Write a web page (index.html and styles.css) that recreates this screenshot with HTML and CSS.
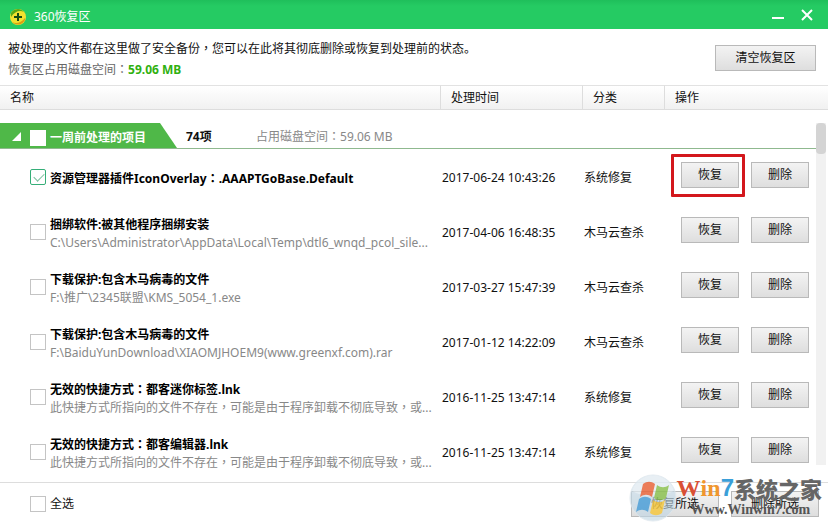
FILE: index.html
```html
<!DOCTYPE html>
<html lang="zh-CN">

<head>
    <meta charset="UTF-8">
    <meta name="viewport" content="width=device-width, initial-scale=1.0">
    <title>360恢复区</title>
    <link rel="stylesheet" href="styles.css">
</head>

<body>
    <header class="title-bar">
        <svg class="logo" viewBox="0 0 18 18" aria-hidden="true">
            <circle cx="9" cy="9" r="8" fill="#f3e12f" />
            <path d="M2 5a8 8 0 0 1 13-1C11 2 6 3 2 9z" fill="#58a818" />
            <path d="M16 12a8 8 0 0 1-13 2c4 2 9 1 13-4z" fill="#dc9d12" />
            <path d="M8 5h2v3h3v2h-3v3H8v-3H5V8h3z" fill="#174d13" />
        </svg>
        <h1>360恢复区</h1>
        <button class="window-button" type="button" aria-label="最小化">
            <svg viewBox="0 0 14 14"><path d="M1 10h12" stroke="#fff" stroke-width="2" /></svg>
        </button>
        <button class="window-button" type="button" aria-label="关闭">
            <svg viewBox="0 0 14 14"><path d="M2 2l10 10M12 2L2 12" stroke="#fff" stroke-width="2" /></svg>
        </button>
    </header>

    <section class="summary">
        <div class="summary-text">
            <p>被处理的文件都在这里做了安全备份<span class="mark">，</span>您可以在此将其彻底删除或恢复到处理前的状态。</p>
            <p class="space">恢复区占用磁盘空间<span class="mark">：</span><strong>59.06 MB</strong></p>
        </div>
        <button class="btn btn-clear" type="button">清空恢复区</button>
    </section>

    <main class="list">
        <table>
            <thead>
                <tr>
                    <th class="col-name">名称</th>
                    <th class="col-time">处理时间</th>
                    <th class="col-type">分类</th>
                    <th class="col-action">操作</th>
                </tr>
            </thead>
            <tbody>
                <tr class="group">
                    <td colspan="4">
                        <div class="group-bar">
                            <label class="group-tab">
                                <svg class="arrow" viewBox="0 0 10 10" aria-hidden="true"><path d="M10 0v10H0z" fill="#fff" /></svg>
                                <input type="checkbox">
                                <span>一周前处理的项目</span>
                            </label>
                            <strong class="group-count">74项</strong>
                            <span class="group-space">占用磁盘空间<span class="mark">：</span>59.06 MB</span>
                        </div>
                    </td>
                </tr>
                <tr>
                    <td>
                        <label class="item">
                            <input type="checkbox" checked>
                            <span class="item-text"><b>资源管理器插件IconOverlay<span class="mark">：</span>.AAAPTGoBase.Default</b></span>
                        </label>
                    </td>
                    <td>2017-06-24 10:43:26</td>
                    <td>系统修复</td>
                    <td>
                        <div class="actions">
                            <span class="highlight"><button class="btn" type="button">恢复</button></span>
                            <button class="btn" type="button">删除</button>
                        </div>
                    </td>
                </tr>
                <tr>
                    <td>
                        <label class="item">
                            <input type="checkbox">
                            <span class="item-text"><b>捆绑软件:被其他程序捆绑安装</b><small>C:\Users\Administrator\AppData\Local\Temp\dtl6_wnqd_pcol_sile...</small></span>
                        </label>
                    </td>
                    <td>2017-04-06 16:48:35</td>
                    <td>木马云查杀</td>
                    <td>
                        <div class="actions">
                            <button class="btn" type="button">恢复</button>
                            <button class="btn" type="button">删除</button>
                        </div>
                    </td>
                </tr>
                <tr>
                    <td>
                        <label class="item">
                            <input type="checkbox">
                            <span class="item-text"><b>下载保护:包含木马病毒的文件</b><small>F:\推广\2345联盟\KMS_5054_1.exe</small></span>
                        </label>
                    </td>
                    <td>2017-03-27 15:47:39</td>
                    <td>木马云查杀</td>
                    <td>
                        <div class="actions">
                            <button class="btn" type="button">恢复</button>
                            <button class="btn" type="button">删除</button>
                        </div>
                    </td>
                </tr>
                <tr>
                    <td>
                        <label class="item">
                            <input type="checkbox">
                            <span class="item-text"><b>下载保护:包含木马病毒的文件</b><small>F:\BaiduYunDownload\XIAOMJHOEM9(www.greenxf.com).rar</small></span>
                        </label>
                    </td>
                    <td>2017-01-12 14:22:09</td>
                    <td>木马云查杀</td>
                    <td>
                        <div class="actions">
                            <button class="btn" type="button">恢复</button>
                            <button class="btn" type="button">删除</button>
                        </div>
                    </td>
                </tr>
                <tr>
                    <td>
                        <label class="item">
                            <input type="checkbox">
                            <span class="item-text"><b>无效的快捷方式<span class="mark">：</span>都客迷你标签.lnk</b><small>此快捷方式所指向的文件不存在<span class="mark">，</span>可能是由于程序卸载不彻底导致<span class="mark">，</span>或...</small></span>
                        </label>
                    </td>
                    <td>2016-11-25 13:47:14</td>
                    <td>系统修复</td>
                    <td>
                        <div class="actions">
                            <button class="btn" type="button">恢复</button>
                            <button class="btn" type="button">删除</button>
                        </div>
                    </td>
                </tr>
                <tr>
                    <td>
                        <label class="item">
                            <input type="checkbox">
                            <span class="item-text"><b>无效的快捷方式<span class="mark">：</span>都客编辑器.lnk</b><small>此快捷方式所指向的文件不存在<span class="mark">，</span>可能是由于程序卸载不彻底导致<span class="mark">，</span>或...</small></span>
                        </label>
                    </td>
                    <td>2016-11-25 13:47:14</td>
                    <td>系统修复</td>
                    <td>
                        <div class="actions">
                            <button class="btn" type="button">恢复</button>
                            <button class="btn" type="button">删除</button>
                        </div>
                    </td>
                </tr>
            </tbody>
        </table>
        <div class="scrollbar"><div class="thumb"></div></div>
    </main>

    <footer class="bottom-bar">
        <label class="select-all"><input type="checkbox"><span>全选</span></label>
        <button class="btn btn-wide" type="button">恢复所选</button>
        <button class="btn btn-wide" type="button">删除所选</button>

        <div class="watermark">
            <svg class="orb" viewBox="0 0 48 48" aria-hidden="true">
                <circle cx="24" cy="24" r="23" fill="#c3d8e6" fill-opacity=".75" stroke="#dfe8ee" />
                <path d="M3 17a22 22 0 0 1 42 0c-12 6-30 7-42 0z" fill="#fff" fill-opacity=".4" />
                <path d="M14 10c4-3 8-3 12 0l-3 13c-4-3-8-3-12 0z" fill="#e8663c" />
                <path d="M28 11c4 3 8 3 12 0l-3 13c-4 3-8 3-12 0z" fill="#8cc152" />
                <path d="M10 25c4-3 8-3 12 0l-3 13c-4-3-8-3-12 0z" fill="#4c9fd8" />
                <path d="M24 26c4 3 8 3 12 0l-3 13c-4 3-8 3-12 0z" fill="#f5c842" />
            </svg>
            <div class="brand">
                <div class="brand-name"><span class="brand-w">W</span><span class="brand-in">in</span><span class="brand-7">7</span><span class="brand-cn">系统之家</span></div>
                <div class="brand-url">Www.Winwin7.com</div>
            </div>
        </div>
    </footer>
</body>

</html>
```
FILE: styles.css
```css
* {
    box-sizing: border-box;
}

body {
    margin: 0;
    background: #fff;
    color: #111;
    font: 12px/18px "Noto Sans", "Noto Sans CJK SC", sans-serif;
}

/* full-width punctuation sits in the middle of its box */
.mark {
    font-family: "Noto Sans CJK TC", sans-serif;
    font-feature-settings: "locl" 0;
    line-height: 1;
}

.title-bar {
    display: flex;
    align-items: center;
    height: 29px;
    padding: 5px 14px 0 9px;
    background: linear-gradient(#1fbf5b, #25cb63 6px);
    color: #fff;
}

.logo {
    width: 18px;
    height: 18px;
}

.title-bar h1 {
    flex: 1;
    margin: 0 0 0 7px;
    font-size: 12px;
    font-weight: normal;
}

.window-button {
    display: flex;
    margin-left: 15px;
    padding: 0 0 4px;
    border: 0;
    background: none;
}

.window-button svg {
    width: 14px;
    height: 14px;
    fill: none;
}

.summary {
    display: flex;
    justify-content: space-between;
    align-items: center;
    height: 56px;
    padding: 2px 12px 0 8px;
}

.summary-text {
    padding-top: 3px;
}

.summary p {
    margin: 0 0 3px;
}

.summary .space {
    margin: 0;
    color: #666;
}

.space strong {
    color: #30b010;
}

.btn {
    width: 58px;
    height: 26px;
    padding: 0;
    border: 1px solid #b9b9b9;
    background: linear-gradient(#f3f3f3, #dedede);
    color: #111;
    font: inherit;
}

.btn-clear {
    width: 101px;
}

.list {
    position: relative;
    padding-bottom: 2px;
}

table {
    width: 100%;
    border-collapse: separate;
    border-spacing: 0;
    table-layout: fixed;
}

th {
    height: 25px;
    padding: 0 10px;
    border-top: 1px solid #e2e2e2;
    border-bottom: 1px solid #ddd;
    background: linear-gradient(#fff, #f1f1f1);
    font-weight: normal;
    text-align: left;
}

th + th {
    border-left: 1px solid #ddd;
}

.col-time {
    width: 142px;
}

.col-type {
    width: 82px;
}

.col-action {
    width: 164px;
}

td {
    height: 55px;
    padding: 0 0 0 2px;
    white-space: nowrap;
}

.group td {
    height: auto;
    padding: 13px 7px 1px 0;
}

.group-bar {
    display: flex;
    height: 26px;
    border-bottom: 1px solid #8fb98f;
    line-height: 28px;
}

.group-tab {
    display: flex;
    align-items: center;
    gap: 4px;
    width: 177px;
    padding: 5px 0 0 12px;
    background: #4fb848;
    clip-path: polygon(0 0, 160px 0, 100% 100%, 0 100%);
    color: #fff;
    font-weight: bold;
}

.arrow {
    width: 9px;
    height: 9px;
    margin: 0 5px 4px 0;
}

.group-count {
    width: 70px;
    margin-left: 9px;
}

.group-space {
    color: #888;
}

input[type="checkbox"] {
    flex: none;
    appearance: none;
    width: 16px;
    height: 16px;
    margin: 0;
    border: 1px solid #c4c4c4;
    background: #fff;
}

.item input:checked {
    border-color: #35ae78;
    border-radius: 2px;
}

.item input:checked::after {
    content: "";
    display: block;
    width: 9px;
    height: 5px;
    margin: 3px;
    border: solid #7cc09f;
    border-width: 0 0 1px 1px;
    transform: rotate(-45deg);
}

.group-tab input {
    border-color: #fff;
}

.item {
    display: flex;
    align-items: center;
    gap: 4px;
    padding: 0 0 1px 28px;
}

.item-text {
    padding-top: 4px;
}

.item b {
    color: #000;
}

.item small {
    display: block;
    color: #888;
    font-size: 12px;
}

.actions {
    display: flex;
    gap: 12px;
    padding: 0 0 6px 15px;
}

.highlight {
    position: relative;
    display: flex;
}

.highlight::before {
    content: "";
    position: absolute;
    inset: -8px -6px -9px -10px;
    border: 3px solid #d3171c;
    border-radius: 1px;
}

.scrollbar {
    position: absolute;
    top: 38px;
    right: 2px;
    bottom: 17px;
    width: 10px;
    background: #f1f1f1;
}

.thumb {
    height: 31px;
    border-radius: 4px;
    background: #d4d4d4;
}

.bottom-bar {
    position: relative;
    display: flex;
    align-items: center;
    gap: 12px;
    height: 42px;
    padding: 0 9px 0 30px;
    border-top: 1px solid #ddd;
}

.select-all {
    display: flex;
    align-items: center;
    gap: 4px;
    margin-right: auto;
}

.btn-wide {
    width: 88px;
}

.watermark {
    position: absolute;
    right: 6px;
    bottom: 2px;
    display: flex;
    pointer-events: none;
}

.orb {
    width: 48px;
    height: 48px;
    opacity: 0.85;
}

.brand-name {
    display: flex;
    align-items: center;
    height: 28px;
    font: bold 24px/28px "Liberation Serif", serif;
}

.brand-w {
    color: #d94f34;
}

.brand-in {
    color: #f0962e;
}

.brand-7 {
    color: #3b9fd8;
    font-family: "Liberation Sans", sans-serif;
}

.brand-cn {
    color: #666;
    font: 900 22px/28px "Noto Sans CJK SC", sans-serif;
}

.brand-url {
    padding-left: 14px;
    color: #555;
    font: bold 14px/16px "Liberation Serif", serif;
}
```
